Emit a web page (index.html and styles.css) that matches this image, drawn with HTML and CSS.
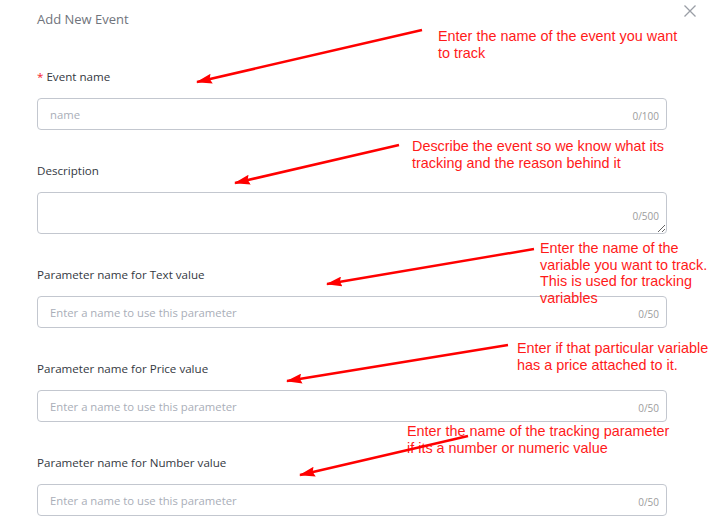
FILE: index.html
```html
<!DOCTYPE html>
<html lang="en">
<head>
<meta charset="utf-8">
<title>Add New Event</title>
<link rel="stylesheet" href="styles.css">
</head>
<body>
<div class="modal">
  <div class="header">
    <div class="title">Add New Event</div>
    <svg class="close" width="12" height="12" viewBox="0 0 12 12"><path d="M0.5 0.5 L11.5 11.5 M11.5 0.5 L0.5 11.5" stroke="#9a9ea6" stroke-width="1.3" fill="none"/></svg>
  </div>
  <form class="form">
    <div class="field">
      <label class="label"><span class="req">*</span> Event name</label>
      <div class="box"><input class="inp" placeholder="name"><span class="count">0/100</span></div>
    </div>
    <div class="field">
      <label class="label">Description</label>
      <div class="area-wrap"><textarea class="area"></textarea><span class="count area-count">0/500</span></div>
    </div>
    <div class="field">
      <label class="label">Parameter name for Text value</label>
      <div class="box"><input class="inp" placeholder="Enter a name to use this parameter"><span class="count">0/50</span></div>
    </div>
    <div class="field">
      <label class="label">Parameter name for Price value</label>
      <div class="box"><input class="inp" placeholder="Enter a name to use this parameter"><span class="count">0/50</span></div>
    </div>
    <div class="field">
      <label class="label">Parameter name for Number value</label>
      <div class="box"><input class="inp" placeholder="Enter a name to use this parameter"><span class="count">0/50</span></div>
    </div>
  </form>
</div>

<div class="note note-1">Enter the name of the event you want<br>to track</div>
<div class="note note-2">Describe the event so we know what its<br>tracking and the reason behind it</div>
<div class="note note-3">Enter the name of the<br>variable you want to track.<br>This is used for tracking<br>variables</div>
<div class="note note-4">Enter if that particular variable<br>has a price attached to it.</div>
<div class="note note-5">Enter the name of the tracking parameter<br>if its a number or numeric value</div>

<svg class="arrows" width="708" height="530" viewBox="0 0 708 530">
  <defs>
    <marker id="ah" viewBox="0 0 16 10" refX="15" refY="5" markerWidth="16" markerHeight="10" markerUnits="userSpaceOnUse" orient="auto">
      <path d="M0,0 L16,5 L0,10 L2,5 z" fill="#ff0000"/>
    </marker>
  </defs>
  <g stroke="#ff0000" stroke-width="2.5" fill="none" marker-end="url(#ah)">
    <line x1="422" y1="30" x2="197" y2="82"/>
    <line x1="399" y1="145" x2="235" y2="183"/>
    <line x1="534" y1="249" x2="327" y2="284"/>
    <line x1="508" y1="345" x2="287" y2="381"/>
    <line x1="468" y1="436" x2="300" y2="475"/>
  </g>
</svg>
</body>
</html>
```
FILE: styles.css
```css
html, body {
  margin: 0;
  padding: 0;
  background: #ffffff;
}
body {
  width: 708px;
  height: 530px;
  overflow: hidden;
  position: relative;
  font-family: "Open Sans", "Noto Sans", sans-serif;
}
.modal {
  box-sizing: border-box;
  width: 708px;
  padding: 0 12px 0 37px;
}
.header {
  display: flex;
  justify-content: space-between;
  align-items: flex-start;
}
.title {
  margin-top: 10px;
  font-size: 13px;
  line-height: 18px;
  color: #70747c;
}
.close {
  margin-top: 5px;
  display: block;
}
.form {
  width: 630px;
  margin: 41px 0 0 0;
  display: flex;
  flex-direction: column;
  gap: 33px;
}
.field {
  display: flex;
  flex-direction: column;
}
.label {
  font-size: 11.6px;
  line-height: 16px;
  color: #343942;
  margin-bottom: 13px;
}
.req {
  color: #f5222d;
}
.box {
  box-sizing: border-box;
  height: 32px;
  border: 1px solid #c3c7cf;
  border-radius: 4px;
  display: flex;
  align-items: center;
  padding: 0 7px 0 12px;
}
.inp {
  flex: 1;
  min-width: 0;
  border: none;
  outline: none;
  padding: 0;
  background: transparent;
  font-family: "Open Sans", "Noto Sans", sans-serif;
  font-size: 11.3px;
  color: #333;
}
.inp::placeholder {
  color: #a9aeb8;
}
.count {
  font-size: 10px;
  color: #9c9c9c;
  padding-top: 4px;
}
.area-wrap {
  position: relative;
}
.area {
  display: block;
  box-sizing: border-box;
  width: 630px;
  height: 42px;
  border: 1px solid #c3c7cf;
  border-radius: 4px;
  resize: vertical;
  outline: none;
  margin: 0;
  padding: 4px 12px;
  font-family: "Open Sans", "Noto Sans", sans-serif;
  font-size: 11px;
}
.area-count {
  position: absolute;
  right: 8px;
  bottom: 11px;
  padding-top: 0;
}
.note {
  position: absolute;
  font-family: "Liberation Sans", Arial, sans-serif;
  font-size: 14.4px;
  line-height: 16.5px;
  color: #ff1a1a;
  white-space: nowrap;
}
.note-1 { left: 438px; top: 28px; }
.note-2 { left: 412px; top: 138px; }
.note-3 { left: 540px; top: 240px; }
.note-4 { left: 517px; top: 340px; }
.note-5 { left: 407px; top: 423px; }
.arrows {
  position: absolute;
  left: 0;
  top: 0;
  pointer-events: none;
}
```
